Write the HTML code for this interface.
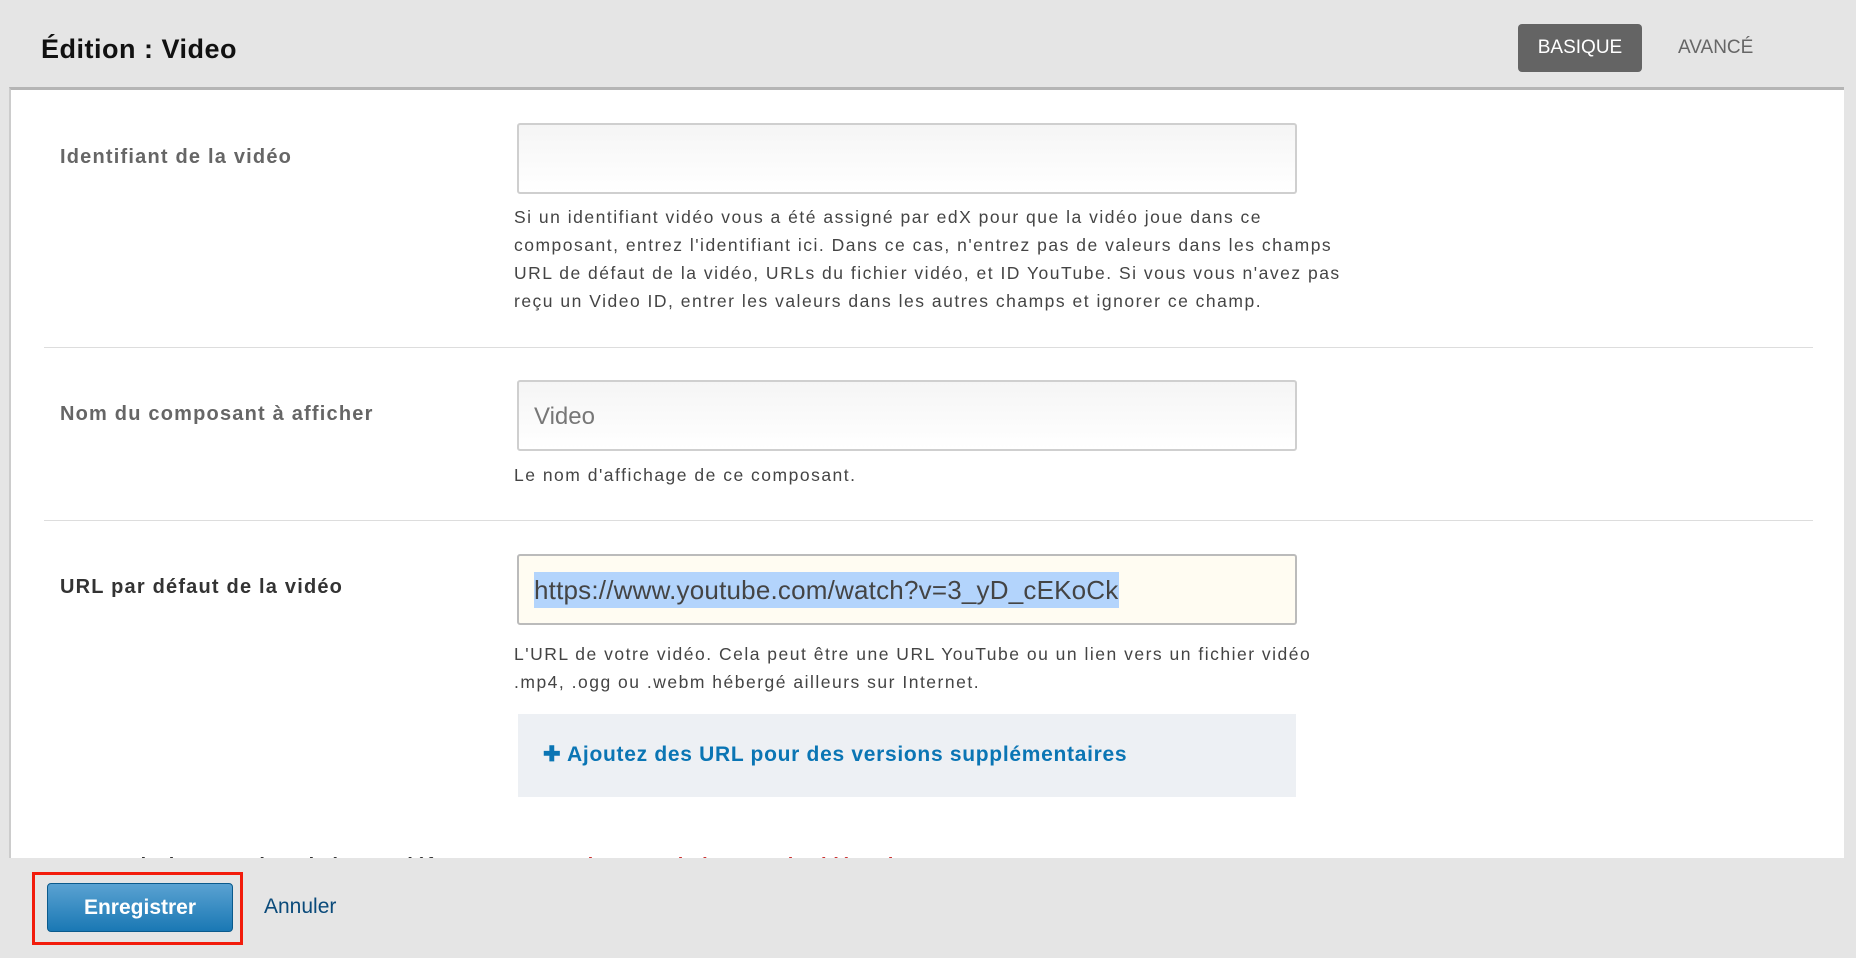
<!DOCTYPE html>
<html><head><meta charset="utf-8"><style>
*{box-sizing:border-box;margin:0;padding:0}
body{width:1856px;height:958px;background:#e5e5e5;font-family:"Liberation Sans",sans-serif;position:relative;overflow:hidden}
.abs{position:absolute}
.title{left:41px;top:34px;font-size:27px;font-weight:bold;color:#111;letter-spacing:0.5px}
.basique{left:1518px;top:24px;width:124px;height:48px;background:#646464;border-radius:4px;color:#fff;font-size:19px;line-height:48px;text-align:center}
.avance{left:1678px;top:24px;line-height:48px;font-size:19px;color:#666}
.panel{left:9px;top:87px;width:1835px;height:771px;background:#fff;border-top:3px solid #b5b5b5;border-left:2px solid #ccc;overflow:hidden}
.lbl{position:absolute;left:49px;font-size:20px;font-weight:bold;color:#666;letter-spacing:1.2px}
.inp{position:absolute;left:506px;width:780px;height:71px;border:2px solid #cfcfcf;border-radius:3px;background:linear-gradient(#f5f5f5,#fff)}
.help{position:absolute;left:503px;font-size:17.5px;line-height:28px;color:#444;white-space:nowrap;letter-spacing:1.5px}
.sep{position:absolute;left:33px;width:1769px;height:1px;background:#ddd}
</style></head><body>
<div class="abs title">Édition : Video</div>
<div class="abs basique">BASIQUE</div>
<div class="abs avance">AVANCÉ</div>
<div class="abs panel">
 <div class="lbl" style="top:56px">Identifiant de la vidéo</div>
 <div class="inp" style="top:33px"></div>
 <div class="help" style="top:113px">Si un identifiant vidéo vous a été assigné par edX pour que la vidéo joue dans ce<br>composant, entrez l'identifiant ici. Dans ce cas, n'entrez pas de valeurs dans les champs<br>URL de défaut de la vidéo, URLs du fichier vidéo, et ID YouTube. Si vous vous n'avez pas<br>reçu un Video ID, entrer les valeurs dans les autres champs et ignorer ce champ.</div>
 <div class="sep" style="top:257px"></div>
 <div class="lbl" style="top:313px">Nom du composant à afficher</div>
 <div class="inp" style="top:290px"><span style="position:absolute;left:15px;top:21px;font-size:24px;color:#777">Video</span></div>
 <div class="help" style="top:371px">Le nom d'affichage de ce composant.</div>
 <div class="sep" style="top:430px"></div>
 <div class="lbl" style="top:486px;color:#333">URL par défaut de la vidéo</div>
 <div class="inp" style="top:464px;background:#fffcf2;border-color:#bbb"><span style="position:absolute;left:15px;top:16px;font-size:26px;line-height:36px;color:#444;background:#b3d4fc;letter-spacing:0.2px">https://www.youtube.com/watch?v=3_yD_cEKoCk</span></div>
 <div class="help" style="top:550px">L'URL de votre vidéo. Cela peut être une URL YouTube ou un lien vers un fichier vidéo<br>.mp4, .ogg ou .webm hébergé ailleurs sur Internet.</div>
 <div style="position:absolute;left:507px;top:624px;width:778px;height:83px;background:#edf0f4"><span style="position:absolute;left:25px;top:28px;font-size:21px;font-weight:bold;color:#0a75b4;letter-spacing:0.7px">✚ Ajoutez des URL pour des versions supplémentaires</span></div>
 <div class="lbl" style="top:765px;color:#333">Transcription synchronisée par défaut</div>
 <div style="position:absolute;left:510px;top:765px;font-size:20px;font-weight:bold;color:#c33">!! Pas de transcription pour la vidéo EdX</div>
</div>
<div class="abs" style="left:32px;top:872px;width:211px;height:73px;border:3px solid #f21c0c"></div>
<div class="abs" style="left:47px;top:883px;width:186px;height:49px;border:1px solid #0a5a8c;border-radius:4px;background:linear-gradient(#5aa2d2,#1a78b4);color:#fff;font-weight:bold;font-size:21px;text-align:center;line-height:47px">Enregistrer</div>
<div class="abs" style="left:264px;top:895px;font-size:21px;color:#0a4a7a">Annuler</div>
</body></html>
